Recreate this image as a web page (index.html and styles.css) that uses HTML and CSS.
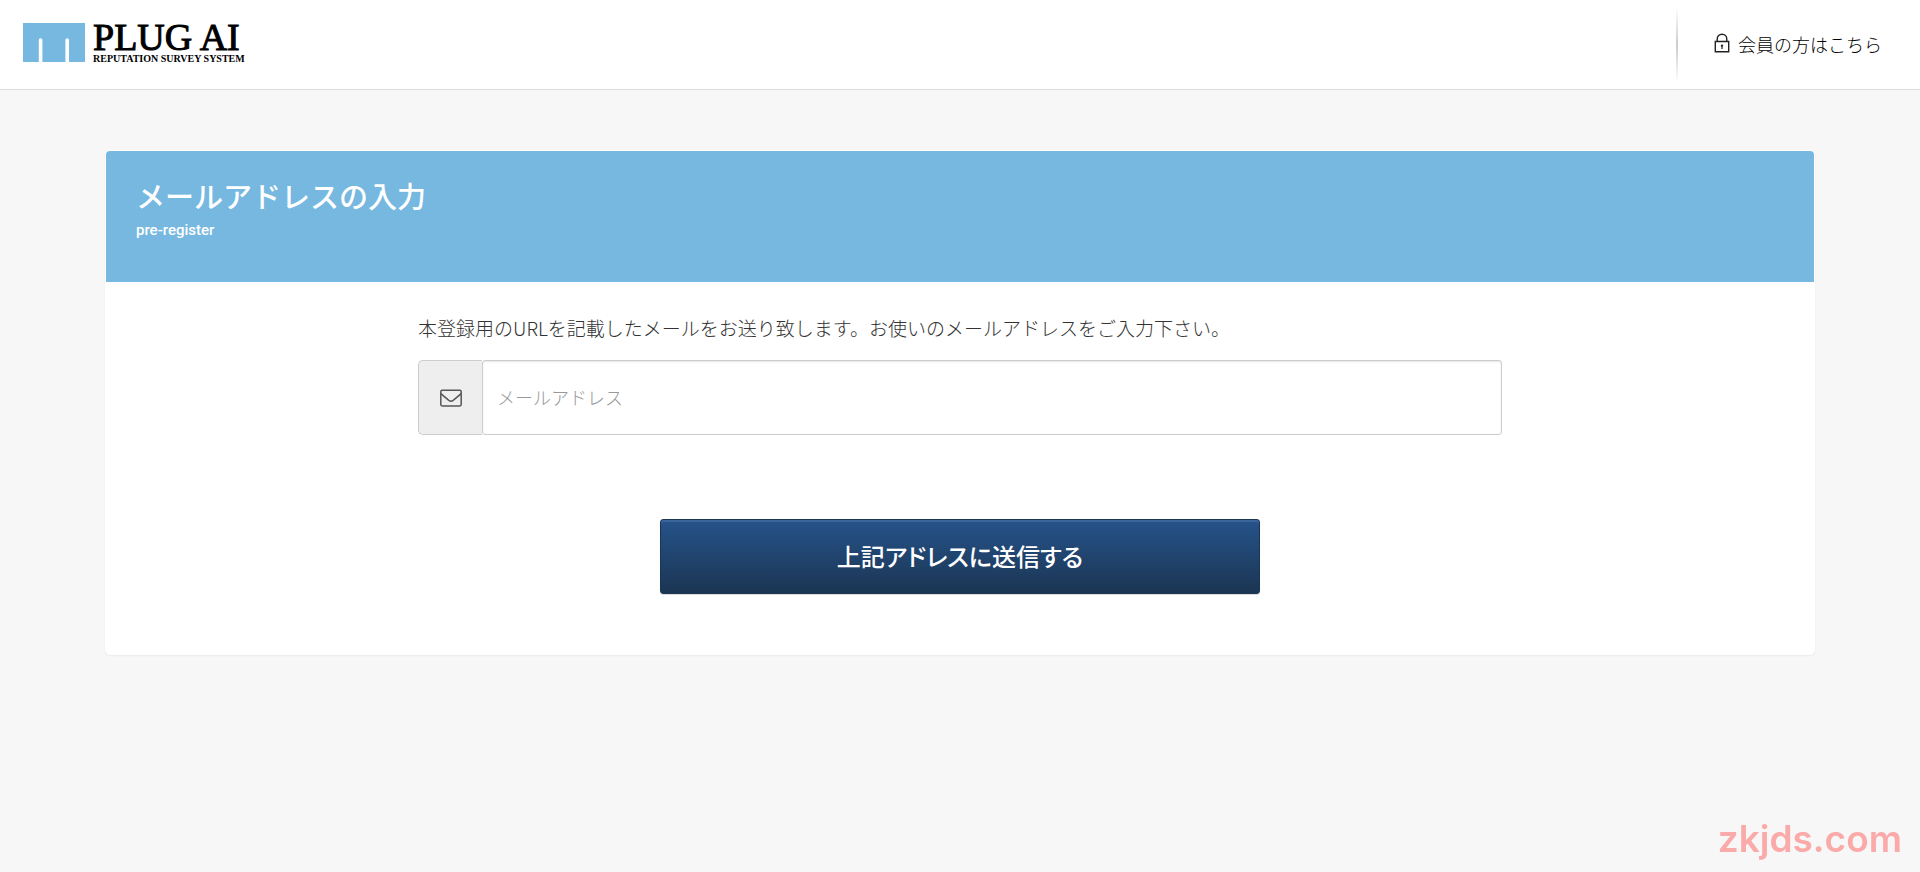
FILE: index.html
```html
<!DOCTYPE html>
<html lang="ja">
<head>
<meta charset="utf-8">
<meta name="viewport" content="width=device-width, initial-scale=1">
<title>メールアドレスの入力 | PLUG AI</title>
<link rel="stylesheet" href="styles.css">
</head>
<body>
<header class="site-header">
  <a class="logo" href="#">
    <svg class="logo-mark" viewBox="0 0 62 39" aria-hidden="true">
      <path fill="#76b8e0" d="M0 0h62v39H46V17a1.8 1.8 0 0 0-3.6 0v22H19.4V17a1.8 1.8 0 0 0-3.6 0v22H0z"/>
    </svg>
    <span class="logo-text">
      <span class="logo-name">PLUG AI</span>
      <span class="logo-tag">REPUTATION SURVEY SYSTEM</span>
    </span>
  </a>
  <a class="member-link" href="#">
    <svg class="lock-icon" viewBox="0 0 15 20" aria-hidden="true">
      <path fill="none" stroke="#222" stroke-width="1.4" d="M2.700 8.500V6a4.800 4.800 0 0 1 9.600 0v2.500M.8 8.500h13.400v10.200H.8z"/>
      <path fill="#222" d="M7.500 11.400a1.300 1.300 0 0 1 .6 2.400v2.200H6.900v-2.200a1.300 1.300 0 0 1 .6-2.400z"/>
    </svg>
    <span>会員の方はこちら</span>
  </a>
</header>
<main class="page">
  <section class="card">
    <div class="card-head">
      <h1 class="title">メールアドレスの入力</h1>
      <p class="subtitle">pre-register</p>
    </div>
    <form class="form">
      <label class="lead" for="email">本登録用のURLを記載したメールをお送り致します。お使いのメールアドレスをご入力下さい。</label>
      <div class="input-group">
        <span class="addon">
          <svg class="mail-icon" viewBox="0 0 22 18" aria-hidden="true">
            <rect x=".8" y="1.300" width="20.400" height="15.600" rx="1.400" fill="none" stroke="#555" stroke-width="1.500"/>
            <path fill="none" stroke="#555" stroke-width="1.500" d="M1 4.600c2.400 2.300 5 4.300 7.700 6.600 1.700 1.500 2.900 1.500 4.600 0C16 8.900 18.600 6.900 21 4.600"/>
          </svg>
        </span>
        <input class="field" id="email" type="email" placeholder="メールアドレス">
      </div>
      <button class="submit" type="button">上記アドレスに送信する</button>
    </form>
  </section>
</main>
<div class="watermark">zkjds.com</div>
</body>
</html>
```
FILE: styles.css
```css
* { box-sizing: border-box; }

body {
  margin: 0;
  background: #f7f7f7;
  color: #333;
  font-family: "Noto Sans CJK JP", sans-serif;
  font-size: 18px;
}

.site-header {
  display: flex;
  justify-content: space-between;
  align-items: center;
  height: 90px;
  padding: 0 38px 0 23px;
  background: #fff;
  border-bottom: 1px solid #ddd;
}

.logo {
  display: flex;
  gap: 8px;
  color: #000;
  text-decoration: none;
  font-family: "Liberation Serif", serif;
}
.logo-mark { width: 62px; height: 39px; }
.logo-text { display: flex; flex-direction: column; white-space: nowrap; }
.logo-name { font-size: 38px; line-height: 28px; -webkit-text-stroke: 1px #000; }
.logo-tag { font-size: 10px; font-weight: 700; line-height: 16px; }

.member-link {
  display: flex;
  align-items: center;
  gap: 8px;
  height: 74px;
  padding: 0 0 2px 36px;
  border-left: 2px solid;
  border-image: linear-gradient(#fff, #ccc, #fff) 1;
  color: #000;
  font-weight: 300;
  text-decoration: none;
}
.lock-icon { width: 16px; height: 20px; margin-bottom: 2px; }

.page { padding: 60px 105px; }

.card {
  background: #fff;
  border: 1px solid #fff;
  border-radius: 5px;
  box-shadow: 0 1px 2px rgba(0, 0, 0, .06);
}

.card-head {
  padding: 23px 30px 38px;
  background: #76b8e0;
  border-radius: 4px 4px 0 0;
  color: #fff;
}
.title { margin: 0; font-size: 29px; line-height: 42px; font-weight: 500; }
.subtitle {
  margin: 0;
  font-family: Roboto, sans-serif;
  font-size: 15px;
  font-weight: 500;
  line-height: 28px;
}

.form {
  display: flex;
  flex-direction: column;
  max-width: 1084px;
  margin: 0 auto;
  padding: 32px 0 60px;
}
.lead { font-size: 19px; line-height: 28px; font-weight: 300; margin-bottom: 18px; }

.input-group { display: flex; height: 75px; }
.addon {
  display: flex;
  align-items: center;
  justify-content: center;
  width: 64px;
  background: #eee;
  border: 1px solid #ccc;
  border-right: 0;
  border-radius: 5px 0 0 5px;
}
.mail-icon { width: 22px; height: 18px; }
.field {
  flex: 1;
  min-width: 0;
  padding: 0 14px 2px;
  border: 1px solid #ccc;
  border-radius: 3px;
  background: #fff;
  box-shadow: inset 0 1px 2px rgba(0, 0, 0, .1);
  font: inherit;
  font-size: 18px;
  font-weight: 300;
}
.field::placeholder { color: #999; opacity: 1; }

.submit {
  align-self: center;
  width: 600px;
  max-width: 100%;
  height: 75px;
  margin-top: 84px;
  padding: 0 0 2px;
  border: 1px solid #1b3552;
  border-radius: 3px;
  background: linear-gradient(#26538a, #1b3552);
  box-shadow: inset 0 2px 0 #3a659a, 0 1px 1px rgba(0, 0, 0, .15);
  color: #fff;
  font: inherit;
  font-size: 24px;
  font-weight: 500;
  font-feature-settings: "palt";
}

.watermark {
  position: fixed;
  right: 18px;
  bottom: 12px;
  color: #fbaaaa;
  font-family: Inter, sans-serif;
  font-size: 37px;
  font-weight: 600;
  line-height: 42px;
}
```
